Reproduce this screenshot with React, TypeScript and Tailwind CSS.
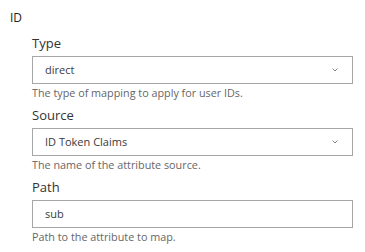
import React from 'react'

function Chevron() {
  return (
    <svg width="6" height="4" viewBox="0 0 6 4" fill="none" stroke="#777" strokeWidth="0.9" strokeLinecap="round" strokeLinejoin="round">
      <path d="M0.8 0.8l2.2 2.2 2.2-2.2" />
    </svg>
  )
}

function Field({ label, value, help, select }: { label: string; value: string; help: string; select?: boolean }) {
  return (
    <div className="flex flex-col">
      <label className="text-[13px] leading-[18px] text-[#333]">{label}</label>
      <div className="mt-[4px] h-[28px] border border-[#a6a6a6] bg-white flex items-center pl-[12px] pr-[14px] justify-between">
        <span className="text-[11px] text-[#3a3a3a]">{value}</span>
        {select && <Chevron />}
      </div>
      <p className="mt-[2px] text-[10.8px] leading-[14px] text-[#666]">{help}</p>
    </div>
  )
}

export default function App() {
  return (
    <div className="w-[365px] h-[252px] bg-white pt-[10px] pl-[10px] pr-[12px]" style={{ fontFamily: '"Open Sans", sans-serif' }}>
      <h3 className="text-[12px] leading-[16px] font-medium text-[#222]">ID</h3>
      <div className="mt-[8px] pl-[22px] flex flex-col gap-[6px]">
        <Field label="Type" value="direct" help="The type of mapping to apply for user IDs." select />
        <Field label="Source" value="ID Token Claims" help="The name of the attribute source." select />
        <Field label="Path" value="sub" help="Path to the attribute to map." />
      </div>
    </div>
  )
}
